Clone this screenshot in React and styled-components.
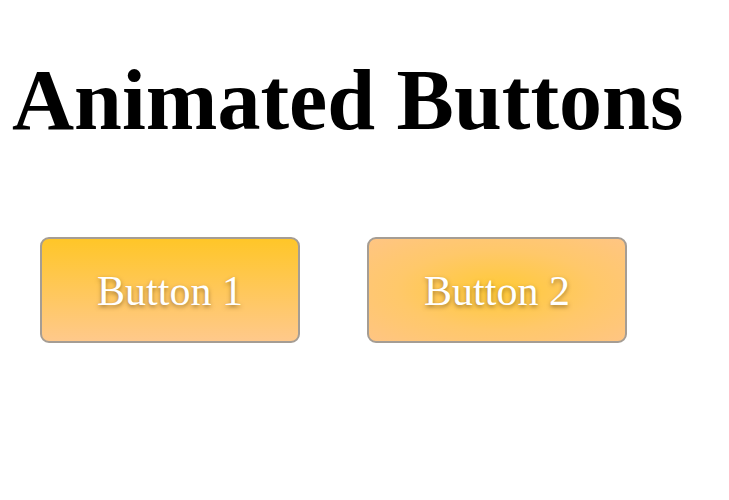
import React from "react";
import styled, { createGlobalStyle } from "styled-components";

const GlobalStyle = createGlobalStyle`
  html, body {
    margin: 0;
    background: #ffffff;
  }
  body {
    font-family: "Liberation Serif", "Times New Roman", serif;
  }
`;

const Page = styled.div`
  padding: 57px 0 0 12px;
`;

const Title = styled.h1`
  margin: 0;
  font-family: "Liberation Serif", "Times New Roman", serif;
  font-size: 86px;
  font-weight: 700;
  line-height: 86px;
  color: #000;
`;

const ButtonRow = styled.div`
  display: flex;
  gap: 67px;
  margin: 94px 0 0 28px;
`;

const Button = styled.button`
  width: 260px;
  height: 106px;
  box-sizing: border-box;
  border: 2px solid #a59d94;
  border-radius: 9px;
  background: ${({ variant }) =>
    variant === "radial"
      ? "radial-gradient(ellipse at center, #ffca36 0%, #ffc86a 55%, #ffc583 100%)"
      : "linear-gradient(to bottom, #ffc628 0%, #ffc98b 100%)"};
  color: #ffffff;
  font-family: "Liberation Serif", "Times New Roman", serif;
  font-size: 42px;
  text-shadow: 0 2px 4px rgba(90, 60, 20, 0.55);
  cursor: pointer;
  padding: 2px 0 0;
`;

export default function App() {
  return (
    <Page>
      <GlobalStyle />
      <Title>Animated Buttons</Title>
      <ButtonRow>
        <Button>Button 1</Button>
        <Button variant="radial">Button 2</Button>
      </ButtonRow>
    </Page>
  );
}
